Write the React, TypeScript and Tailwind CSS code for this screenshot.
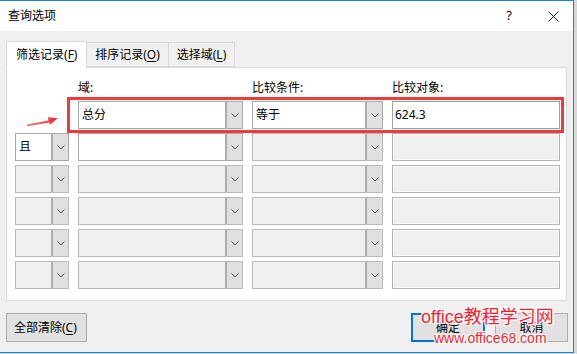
import React from 'react';

const FONT = { fontFamily: '"Noto Sans", "Noto Sans CJK SC", sans-serif' };

function Chevron() {
  return (
    <svg width="8" height="5" viewBox="0 0 8 5" className="block">
      <path d="M0.5 0.5 L4 4 L7.5 0.5" fill="none" stroke="#5a5a5a" strokeWidth="1" />
    </svg>
  );
}

function Combo({ text, enabled }: { text?: string; enabled?: boolean }) {
  return (
    <div
      className={`h-[28px] flex border ${
        enabled ? 'bg-white border-[#a9a9a9]' : 'bg-[#f0f0f0] border-[#b9b9b9]'
      }`}
    >
      <div className="flex-1 flex items-center pl-[3px] text-[12px] text-black">{text}</div>
      <div className="w-[17px] flex items-center justify-center bg-[#e0e0e0] border-l-2 border-[#adadad]">
        <Chevron />
      </div>
    </div>
  );
}

function TextBox({ text, enabled }: { text?: string; enabled?: boolean }) {
  return (
    <div
      className={`h-[28px] flex items-center pl-[2px] text-[12px] border ${
        enabled ? 'bg-white border-[#a0a0a0]' : 'bg-[#f0f0f0] border-[#b4b4b4] shadow-[inset_0_0_0_1px_#f8f8f8]'
      }`}
    >
      {text}
    </div>
  );
}

function Tab({ label, hot, active }: { label: string; hot: string; active?: boolean }) {
  return (
    <div
      className={`flex items-center border border-[#d9d9d9] text-[12px] ${
        active
          ? 'h-[27px] bg-white border-b-white -mb-px z-10 w-[81px] pl-[9px]'
          : 'h-[25px] bg-[#f0f0f0] border-l-0 justify-center'
      }`}
    >
      {label}(<span className="underline underline-offset-2">{hot}</span>)
    </div>
  );
}

const OUTLINE =
  '1px 0 #fff, -1px 0 #fff, 0 1px #fff, 0 -1px #fff, 1px 1px #fff, -1px -1px #fff, 1px -1px #fff, -1px 1px #fff';

export default function App() {
  const rows = [0, 1, 2, 3, 4, 5];
  return (
    <div className="w-[577px] h-[354px] bg-[#d8d8d8] relative overflow-hidden" style={FONT}>
      <div className="w-[574px] h-[353px] border-t border-r border-b border-[#1883d7] bg-[#f0f0f0] flex flex-col">
        {/* Title bar */}
        <div className="h-[30px] bg-white flex items-center pl-[8px] text-[12px] text-black">
          <span className="flex-1">查询选项</span>
          <span className="text-[13px] mr-[36px]">?</span>
          <svg width="11" height="11" viewBox="0 0 11 11" className="mr-[14px]">
            <path d="M0.5 0.5 L10.5 10.5 M10.5 0.5 L0.5 10.5" stroke="#111" strokeWidth="1" />
          </svg>
        </div>

        {/* Body */}
        <div className="px-[6px] pt-[10px] flex flex-col">
          <div className="flex items-end h-[26px]">
            <Tab label="筛选记录" hot="F" active />
            <div className="w-[82px]">
              <Tab label="排序记录" hot="O" />
            </div>
            <div className="w-[66px]">
              <Tab label="选择域" hot="L" />
            </div>
          </div>

          <div className="relative w-[561px] h-[234px] bg-white border border-[#d9d9d9] pl-[8px] pt-[13px]">
            <div className="grid grid-cols-[54px_165px_131px_168px] gap-x-[9px] text-[12px] h-[14px] leading-[14px] mb-[6px]">
              <div />
              <div>域:</div>
              <div>比较条件:</div>
              <div>比较对象:</div>
            </div>
            <div className="grid grid-cols-[54px_165px_131px_168px] gap-x-[9px] gap-y-[4px]">
              {rows.map((r) => (
                <React.Fragment key={r}>
                  {r === 0 ? <div /> : <Combo text={r === 1 ? '且' : undefined} enabled={r === 1} />}
                  <Combo text={r === 0 ? '总分' : undefined} enabled={r <= 1} />
                  <Combo text={r === 0 ? '等于' : undefined} enabled={r === 0} />
                  <TextBox text={r === 0 ? '624.3' : undefined} enabled={r === 0} />
                </React.Fragment>
              ))}
            </div>

            {/* annotation overlay */}
            <div className="absolute left-[60px] top-[29px] w-[497px] h-[36px] border-[3px] border-[#f23a3a]" />
            <svg className="absolute left-[19px] top-[46px]" width="34" height="14" viewBox="0 0 34 14">
              <defs>
                <linearGradient id="ar" x1="0" x2="1" y1="0" y2="0">
                  <stop offset="0" stopColor="#f47272" />
                  <stop offset="1" stopColor="#ee2b2b" />
                </linearGradient>
              </defs>
              <path d="M1 10.6 L22.5 6.6 L21.8 3.2 L31.8 4.2 L24 10.8 L23.3 8.4 L1.3 12.2 Z" fill="url(#ar)" />
            </svg>
          </div>

          {/* Buttons */}
          <div className="flex items-center mt-[12px] h-[29px]">
            <div className="w-[81px] h-[29px] bg-[#e1e1e1] border border-[#adadad] flex items-center pl-[7px] text-[12px]">
              全部清除(<span className="underline underline-offset-2">C</span>)
            </div>
            <div className="flex-1" />
            <div className="w-[74px] h-[29px] bg-[#e1e1e1] border-2 border-[#0078d7] flex items-center justify-center text-[12px] mr-[10px]">
              确定
            </div>
            <div className="w-[73px] h-[29px] bg-[#e1e1e1] border border-[#adadad] flex items-center justify-center text-[12px] -mr-[1px]">
              取消
            </div>
          </div>
        </div>
      </div>

      {/* watermark overlay */}
      <div
        className="absolute left-[421px] top-[305px] text-[18px] leading-[24px] text-[#ff1a2e] whitespace-nowrap"
        style={{ fontFamily: '"Liberation Sans", "Noto Sans CJK SC", sans-serif', textShadow: OUTLINE }}
      >
        office教程学习网
      </div>
      <div
        className="absolute left-[434px] top-[329px] text-[14px] leading-[18px] text-[#ff1a2e] whitespace-nowrap"
        style={{ fontFamily: '"Liberation Sans", sans-serif', textShadow: OUTLINE }}
      >
        www.office68.com
      </div>
    </div>
  );
}
